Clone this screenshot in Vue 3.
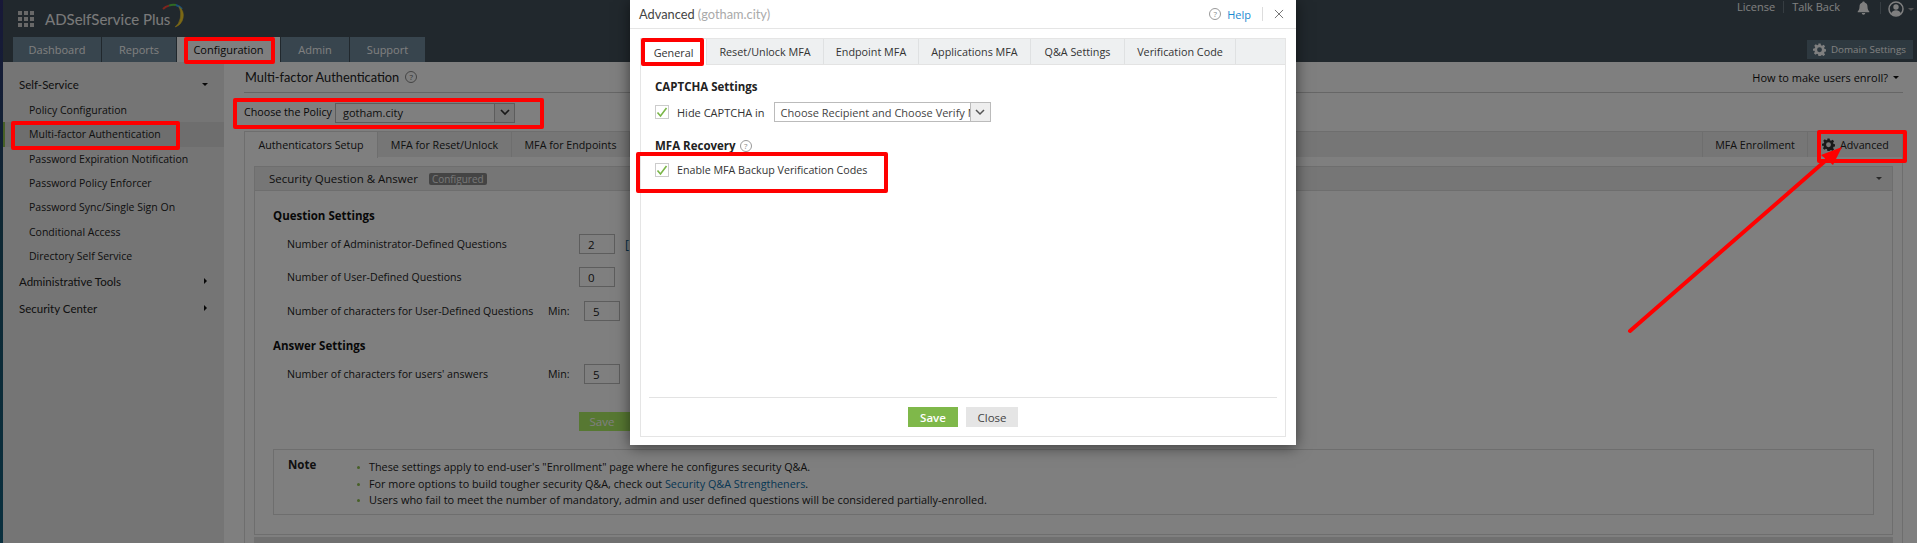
<script setup>
const mainTabs = [
  { name: 'Dashboard', w: 89 },
  { name: 'Reports', w: 75 },
  { name: 'Configuration', w: 104, active: true },
  { name: 'Admin', w: 69 },
  { name: 'Support', w: 76 }
]
const sideItems = [
  { name: 'Policy Configuration' },
  { name: 'Multi-factor Authentication', active: true },
  { name: 'Password Expiration Notification' },
  { name: 'Password Policy Enforcer' },
  { name: 'Password Sync/Single Sign On' },
  { name: 'Conditional Access' },
  { name: 'Directory Self Service' }
]
const modalTabs = [
  { name: 'General', w: 66, active: true },
  { name: 'Reset/Unlock MFA', w: 117 },
  { name: 'Endpoint MFA', w: 95 },
  { name: 'Applications MFA', w: 112 },
  { name: 'Q&A Settings', w: 94 },
  { name: 'Verification Code', w: 111 }
]
const marks = [
  { id: 'm1', x: 184, y: 37, w: 91, h: 27 },
  { id: 'm2', x: 11, y: 121, w: 169, h: 29 },
  { id: 'm3', x: 233, y: 98, w: 311, h: 31 },
  { id: 'm4', x: 641, y: 38, w: 63, h: 28 },
  { id: 'm5', x: 636, y: 152, w: 252, h: 41 },
  { id: 'm6', x: 1817, y: 130, w: 90, h: 33 }
]
const markStyle = m => ({ left: m.x + 'px', top: m.y + 'px', width: m.w + 'px', height: m.h + 'px' })
</script>

<template>
  <div class="page">
    <div class="strip"></div>
    <div class="app">
      <header class="header">
        <div class="brandrow">
          <div class="brand">
            <div class="grid"><i v-for="n in 9" :key="n"></i></div>
            <span class="brandname">ADSelfService Plus</span>
            <svg class="swoosh" width="26" height="26" viewBox="0 0 26 26" fill="none" stroke-width="2">
              <path d="M2 6 A12 12 0 0 1 8 2.6" stroke="#ff4a3a"/>
              <path d="M8 2.6 A12 12 0 0 1 15 2" stroke="#5fd548"/>
              <path d="M15 2 A12 12 0 0 1 21 6" stroke="#2f9ff6"/>
              <path d="M18 3.4 A12 12 0 0 1 14 24 A10 14 0 0 0 18 3.4Z" fill="#f6d02a" stroke="#f6d02a" stroke-width=".6"/>
            </svg>
          </div>
          <div class="toplinks">
            <span>License</span><b class="sep"></b><span>Talk Back</span>
            <svg class="bell" width="13" height="14" viewBox="0 0 13 14"><path d="M6.5 0.5c.8 0 1.2.5 1.2 1.1 2 .6 2.8 2.2 2.8 4.2 0 2.4.6 3.6 1.8 4.7v.8H.7v-.8C1.900 9.400 2.500 8.200 2.500 5.800c0-2 .8-3.600 2.800-4.200C5.300 1 5.700.5 6.500.5zM4.800 12h3.400c0 1-.7 1.700-1.700 1.700S4.800 13 4.800 12z" fill="#fff"/></svg>
            <b class="sep sep2"></b>
            <svg class="avatar" width="16" height="16" viewBox="0 0 16 16" fill="none"><circle cx="8" cy="8" r="7" stroke="#fff" stroke-width="1.500"/><circle cx="8" cy="6" r="2.700" fill="#fff"/><path d="M3 13c.6-2.600 2.500-3.800 5-3.800s4.400 1.200 5 3.800c-1.400 1.100-3 1.700-5 1.700s-3.600-.6-5-1.700z" fill="#fff"/></svg>
            <i class="caret light"></i>
          </div>
        </div>
        <div class="tabrow">
          <nav class="maintabs">
            <a v-for="t in mainTabs" :key="t.name" :class="['maintab', { on: t.active }]" :style="{ width: t.w + 'px' }">{{ t.name }}</a>
          </nav>
          <div class="domain">
            <svg class="gear" width="13" height="13" viewBox="0 0 24 24"><path fill="#fff" fill-rule="evenodd" d="M10 1h4l.7 3.300 2 .8 2.800-1.800 2.800 2.800-1.800 2.800.8 2 3.300.7v4l-3.300.7-.8 2 1.800 2.800-2.800 2.800-2.800-1.800-2 .8L14 24h-4l-.7-3.300-2-.8-2.800 1.800-2.800-2.800 1.800-2.800-.8-2L0 14.500v-4l3.300-.7.8-2-1.800-2.800 2.800-2.800 2.800 1.800 2-.8zM12 8a4.500 4.500 0 1 0 0 9 4.500 4.500 0 0 0 0-9z"/></svg>
            <span>Domain Settings</span>
          </div>
        </div>
      </header>

      <div class="body">
        <aside class="side">
          <div class="sidehead first"><span>Self-Service</span><i class="caret dark"></i></div>
          <a v-for="s in sideItems" :key="s.name" :class="['sideitem', { on: s.active }]">{{ s.name }}</a>
          <div class="sidehead second"><span>Administrative Tools</span><i class="caret-r"></i></div>
          <div class="sidehead third"><span>Security Center</span><i class="caret-r"></i></div>
        </aside>

        <main class="main">
          <div class="titlerow">
            <h1>Multi-factor Authentication</h1>
            <span class="q">?</span>
            <span class="howto">How to make users enroll?<i class="caret dark"></i></span>
          </div>
          <div class="policy">
            <label>Choose the Policy</label>
            <div class="select pol"><span>gotham.city</span><em><svg width="10" height="7" viewBox="0 0 10 7"><path d="M1 1l4 4 4-4" fill="none" stroke="#333" stroke-width="1.700"/></svg></em></div>
          </div>
          <div class="pagetabs">
            <a class="ptab on" style="width:133px">Authenticators Setup</a>
            <a class="ptab" style="width:134px">MFA for Reset/Unlock</a>
            <a class="ptab" style="width:118px">MFA for Endpoints</a>
            <div class="fill"></div>
            <a class="ptab rt" style="width:105px">MFA Enrollment</a>
            <a class="ptab rt adv" style="width:95px">
              <svg class="gear" width="13" height="13" viewBox="0 0 24 24"><path fill="#333" fill-rule="evenodd" d="M10 1h4l.7 3.300 2 .8 2.800-1.800 2.800 2.800-1.800 2.800.8 2 3.300.7v4l-3.300.7-.8 2 1.800 2.800-2.800 2.800-2.800-1.800-2 .8L14 24h-4l-.7-3.300-2-.8-2.800 1.800-2.800-2.800 1.800-2.800-.8-2L0 14.500v-4l3.300-.7.8-2-1.800-2.800 2.800-2.800 2.800 1.800 2-.8zM12 8a4.500 4.500 0 1 0 0 9 4.500 4.500 0 0 0 0-9z"/></svg>
              Advanced
            </a>
          </div>
          <div class="tabbody">
            <div class="sechead">
              <span class="sectitle">Security Question &amp; Answer</span>
              <span class="badge">Configured</span>
              <i class="caret gray"></i>
            </div>
            <section class="secbody">
              <h3 class="h-q">Question Settings</h3>
              <div class="row r1"><span class="lab wide">Number of Administrator-Defined Questions</span><span class="inp">2</span><span class="brk">[</span></div>
              <div class="row r2"><span class="lab wide">Number of User-Defined Questions</span><span class="inp">0</span></div>
              <div class="row r3"><span class="lab">Number of characters for User-Defined Questions</span><span class="min">Min:</span><span class="inp">5</span></div>
              <h3 class="h-a">Answer Settings</h3>
              <div class="row r4"><span class="lab">Number of characters for users' answers</span><span class="min">Min:</span><span class="inp">5</span></div>
              <button class="savebtn">Save</button>
              <div class="note">
                <strong>Note</strong>
                <ul>
                  <li>These settings apply to end-user's "Enrollment" page where he configures security Q&amp;A.</li>
                  <li>For more options to build tougher security Q&amp;A, check out <a>Security Q&amp;A Strengtheners</a>.</li>
                  <li class="long">Users who fail to meet the number of mandatory, admin and user defined questions will be considered partially-enrolled.</li>
                </ul>
              </div>
            </section>
            <div class="nextbar"></div>
          </div>
        </main>
      </div>
    </div>

    <div class="overlay"></div>

    <div class="modal">
      <div class="mhead">
        <span class="mtitle">Advanced <span>(gotham.city)</span></span>
        <span class="mq">?</span>
        <a class="help">Help</a>
        <b class="msep"></b>
        <svg width="10" height="10" viewBox="0 0 11 11"><path d="M1 1l9 9M10 1l-9 9" stroke="#777" stroke-width="1.100" fill="none"/></svg>
      </div>
      <div class="mbox">
        <div class="mtabs">
          <a v-for="t in modalTabs" :key="t.name" :class="['mtab', { on: t.active }]" :style="{ width: t.w + 'px' }">{{ t.name }}</a>
        </div>
        <div class="mcontent">
          <h3 class="m-h1">CAPTCHA Settings</h3>
          <div class="mrow">
            <span class="chk"><svg width="12" height="11" viewBox="0 0 12 11"><path d="M1.500 5.500l3 3.500L10.500 1" fill="none" stroke="#7ab648" stroke-width="1.600"/></svg></span>
            <span>Hide CAPTCHA in</span>
            <div class="select cap"><span>Choose Recipient and Choose Verify M</span><em><svg width="10" height="7" viewBox="0 0 10 7"><path d="M1 1l4 4 4-4" fill="none" stroke="#555" stroke-width="1.500"/></svg></em></div>
          </div>
          <h3 class="m-h2">MFA Recovery <span class="mq small">?</span></h3>
          <div class="mrow second">
            <span class="chk"><svg width="12" height="11" viewBox="0 0 12 11"><path d="M1.500 5.500l3 3.500L10.500 1" fill="none" stroke="#7ab648" stroke-width="1.600"/></svg></span>
            <span class="enable">Enable MFA Backup Verification Codes</span>
          </div>
        </div>
        <div class="mfoot">
          <button class="ok">Save</button>
          <button class="no">Close</button>
        </div>
      </div>
    </div>

    <div v-for="m in marks" :key="m.id" class="mark" :style="markStyle(m)"></div>
    <svg class="arrow" width="1917" height="543" viewBox="0 0 1917 543">
      <path d="M1630 331L1832 155" stroke="#f00" stroke-width="4" stroke-linecap="round" fill="none"/>
      <path d="M1842 147L1821 155L1833 165Z" fill="#f00"/>
    </svg>
  </div>
</template>

<style>
html, body { margin: 0; padding: 0; overflow: hidden; background: #fff; }
</style>

<style scoped>
.page { position: relative; width: 1917px; height: 543px; overflow: hidden; display: flex; font-family: "Open Sans", "Liberation Sans", sans-serif; font-size: 11px; color: #222; }
.strip { width: 3px; background: linear-gradient(#303070, #1d4f66 40%, #14607e); flex: none; }
.app { flex: 1; display: flex; flex-direction: column; min-width: 0; }
.header { height: 62px; background: #42505a; flex: none; }
.brandrow { height: 37px; display: flex; justify-content: space-between; }
.brand { display: flex; align-items: center; position: relative; padding-left: 15px; }
.grid { display: grid; grid-template-columns: repeat(3, 4px); gap: 2px; }
.grid i { width: 4px; height: 4px; background: #d0d0d0; }
.brandname { font-family: Lato, sans-serif; font-size: 15px; margin-left: 11px; color: #f4f4f4; }
.swoosh { position: absolute; left: 158px; top: 3px; }
.toplinks { display: flex; align-items: flex-start; color: #fff; font-size: 11px; line-height: 14px; padding-right: 3px; }
.sep { width: 1px; height: 12px; background: #6c7a84; margin: 1px 8px 0; }
.bell { margin: 1px 0 0 17px; }
.sep2 { margin: 2px 7px 0 10px; }
.avatar { margin-top: 1px; }
.caret { display: inline-block; width: 0; height: 0; border: 3.500px solid transparent; border-top-color: currentColor; border-bottom-width: 0; }
.caret.light { color: #aaa; margin: 8px 0 0 4px; }
.caret.dark { color: #111; }
.caret.gray { color: #555; margin-left: auto; margin-right: 10px; }
.caret-r { width: 0; height: 0; border: 3px solid transparent; border-left-color: #111; border-right-width: 0; margin-right: 1px; }
.tabrow { height: 25px; display: flex; justify-content: space-between; padding-left: 10px; }
.maintabs { display: flex; }
.maintab { height: 25px; display: flex; align-items: center; justify-content: center; background: #708a9c; color: #fff; font-size: 11px; border-right: 1px solid #42505a; box-sizing: border-box; }
.maintab.on { background: #fff; color: #111; }
.domain { width: 106px; height: 19px; margin: 3px 4px 0 0; background: #5c7280; display: flex; align-items: center; color: #fff; font-size: 9.800px; padding-left: 6px; box-sizing: border-box; gap: 5px; white-space: nowrap; }
.body { flex: 1; display: flex; min-height: 0; }
.side { width: 221px; background: #ebebeb; flex: none; display: flex; flex-direction: column; }
.sidehead { display: flex; align-items: center; justify-content: space-between; padding: 0 16px; font-family: Lato, sans-serif; font-size: 11.500px; color: #222; height: 24px; }
.sidehead.first { margin-top: 10px; margin-bottom: 2px; }
.sidehead.second { margin-top: 1px; height: 24px; }
.sidehead.third { margin-top: 3px; }
.sideitem { height: 24.300px; display: flex; align-items: center; padding-left: 26px; color: #222; font-size: 10.500px; }
.sideitem.on { background: #dcdcdc; box-shadow: inset 2px 0 0 #8fc04f; }
.main { flex: 1; min-width: 0; padding: 0 14px 0 20px; display: flex; flex-direction: column; background: #fff; }
.titlerow { height: 30px; display: flex; align-items: center; border-bottom: 1px solid #ccc; flex: none; }
.titlerow h1 { font-family: Lato, sans-serif; font-weight: 400; font-size: 12.800px; margin: 0 0 0 1px; color: #222; }
.q { width: 10px; height: 10px; border: 1px solid #888; border-radius: 50%; font-size: 8px; line-height: 10px; text-align: center; margin-left: 6px; color: #666; }
.howto { margin-left: auto; display: flex; align-items: center; gap: 5px; font-size: 11px; color: #111; padding-right: 4px; }
.policy { height: 38px; display: flex; align-items: center; flex: none; }
.policy label { color: #111; margin-right: 3px; font-size: 10.700px; width: 88px; white-space: nowrap; flex: none; }
.select { border: 1px solid #bbb; display: flex; align-items: stretch; height: 20px; box-sizing: border-box; background: #fff; }
.select span { flex: 1; display: flex; align-items: center; padding-left: 7px; overflow: hidden; white-space: nowrap; }
.select em { width: 19px; background: #eee; border-left: 1px solid #bbb; display: flex; align-items: center; justify-content: center; flex: none; }
.select.pol { width: 180px; margin-top: 1px; }
.pagetabs { height: 26px; display: flex; background: #ededed; border: 1px solid #ddd; border-bottom: 0; box-sizing: border-box; flex: none; }
.ptab { display: flex; align-items: center; justify-content: center; font-size: 10.700px; color: #222; border-right: 1px solid #ddd; box-sizing: border-box; height: 25px; }
.ptab.on { background: #fff; height: 26px; }
.ptab.rt { border-right: 0; border-left: 1px solid #ddd; }
.ptab.adv { gap: 5px; justify-content: flex-start; padding-left: 14px; }
.fill { flex: 1; }
.tabbody { flex: 1; border-left: 1px solid #ddd; border-right: 1px solid #ddd; padding: 9px 9px 0; min-height: 0; }
.sechead { height: 25px; background: #ededed; border: 1px solid #ddd; display: flex; align-items: center; box-sizing: border-box; padding-left: 14px; }
.sectitle { font-size: 11.500px; }
.badge { background: #888; color: #eee; font-size: 10px; line-height: 12px; padding: 0 3px; border-radius: 2px; margin-left: 11px; }
.secbody { height: 344px; border: 1px solid #ddd; border-top: 0; box-sizing: border-box; padding-left: 18px; display: flex; flex-direction: column; }
.secbody h3 { margin: 0; font-size: 11.500px; font-weight: 700; color: #111; line-height: 16px; }
.h-q { margin-top: 17px !important; }
.row { display: flex; align-items: center; padding-left: 14px; height: 20px; }
.r1 { margin-top: 10px; }
.r2 { margin-top: 13px; }
.r3 { margin-top: 14px; }
.h-a { margin-top: 17px !important; }
.r4 { margin-top: 10px; }
.lab { width: 261px; flex: none; color: #222; font-size: 10.600px; white-space: nowrap; }
.lab.wide { width: 292px; }
.min { width: 36px; flex: none; font-size: 10.600px; }
.inp { width: 36px; height: 20px; border: 1px solid #bbb; box-sizing: border-box; padding-left: 8px; display: flex; align-items: center; background: #fff; font-size: 11.500px; flex: none; }
.brk { margin-left: 10px; color: #0b5c8a; font-size: 12px; }
.savebtn { width: 60px; height: 19px; margin: 28px 0 0 306px; background: #aef064; border: 0; color: #fff; font: 11.500px "Open Sans", sans-serif; padding: 0 14px 0 0; }
.note { margin-top: 18px; margin-right: 18px; height: 66px; border: 1px solid #ddd; box-sizing: border-box; display: flex; }
.note strong { width: 83px; padding: 7px 0 0 14px; box-sizing: border-box; flex: none; font-size: 11.500px; }
.note ul { margin: 0; padding: 9px 0 0 12px; list-style: none; }
.note li { position: relative; line-height: 16.500px; color: #222; font-size: 10.800px; white-space: nowrap; }
.note li.long { font-size: 10.960px; }
.note li::before { content: ""; position: absolute; left: -12px; top: 7px; width: 3px; height: 3px; background: #8fc04f; border-radius: 50%; }
.note a { color: #0b6ea8; }
.nextbar { height: 30px; margin-top: 2px; background: #e0e0e0; }
.overlay { position: absolute; inset: 0; background: rgba(0, 0, 0, 0.5); }
.modal { position: absolute; left: 630px; top: 0; width: 666px; height: 445px; background: #fff; box-shadow: 0 2px 14px rgba(0, 0, 0, .55); box-sizing: border-box; padding: 0 10px; display: flex; flex-direction: column; }
.mhead { height: 28px; margin: 0 -10px; padding: 0 12px 0 9px; display: flex; align-items: center; border-bottom: 1px solid #e5e5e5; flex: none; }
.mtitle { font-family: Lato, sans-serif; font-size: 12.800px; color: #444; margin-right: auto; }
.mtitle span { color: #aaa; }
.mq { width: 10px; height: 10px; border: 1px solid #999; border-radius: 50%; font-size: 8px; line-height: 10px; text-align: center; color: #888; display: inline-block; }
.mq.small { margin-left: 4px; font-weight: 400; }
.help { color: #1b8ad0; font-size: 11px; margin-left: 6px; }
.msep { width: 1px; height: 14px; background: #ddd; margin: 0 11px; }
.mbox { margin-top: 9px; flex: 1; border: 1px solid #e5e5e5; margin-bottom: 8px; display: flex; flex-direction: column; min-height: 0; }
.mtabs { height: 25px; background: #eef0f1; display: flex; flex: none; border-bottom: 1px solid #e3e3e3; }
.mtab { display: flex; align-items: center; justify-content: center; color: #333; font-size: 10.800px; border-right: 1px solid #dfe1e2; box-sizing: border-box; }
.mtab.on { background: #fff; height: 26px; }
.mcontent { flex: 1; padding: 0 14px; color: #333; font-size: 11px; }
.mcontent h3 { margin: 0; font-size: 11.500px; font-weight: 700; color: #222; line-height: 16px; }
.m-h1 { margin-top: 14px !important; }
.mrow { display: flex; align-items: center; height: 20px; margin-top: 7px; }
.enable { font-size: 10.700px; }
.chk { width: 14px; height: 14px; border: 1px solid #ccc; box-sizing: border-box; margin-right: 8px; display: flex; align-items: center; justify-content: center; flex: none; }
.select.cap { width: 217px; margin-left: 9px; height: 20px; }
.select.cap span { padding-left: 6px; color: #444; }
.m-h2 { margin-top: 16px !important; display: flex; align-items: center; }
.mrow.second { margin-top: 6px; }
.mfoot { height: 39px; margin: 0 8px; border-top: 1px solid #e3e3e3; display: flex; justify-content: center; padding-top: 9px; gap: 8px; flex: none; box-sizing: border-box; }
.mfoot button { height: 20px; border: 0; font: 11.500px "Open Sans", sans-serif; padding: 0; }
.ok { width: 50px; background: #7fb84a; color: #fff; font-weight: 600 !important; }
.no { width: 52px; background: #e5e5e5; color: #444; }
.mark { position: absolute; border: 4px solid #f00; border-radius: 2px; box-sizing: border-box; }
.arrow { position: absolute; left: 0; top: 0; }
</style>
